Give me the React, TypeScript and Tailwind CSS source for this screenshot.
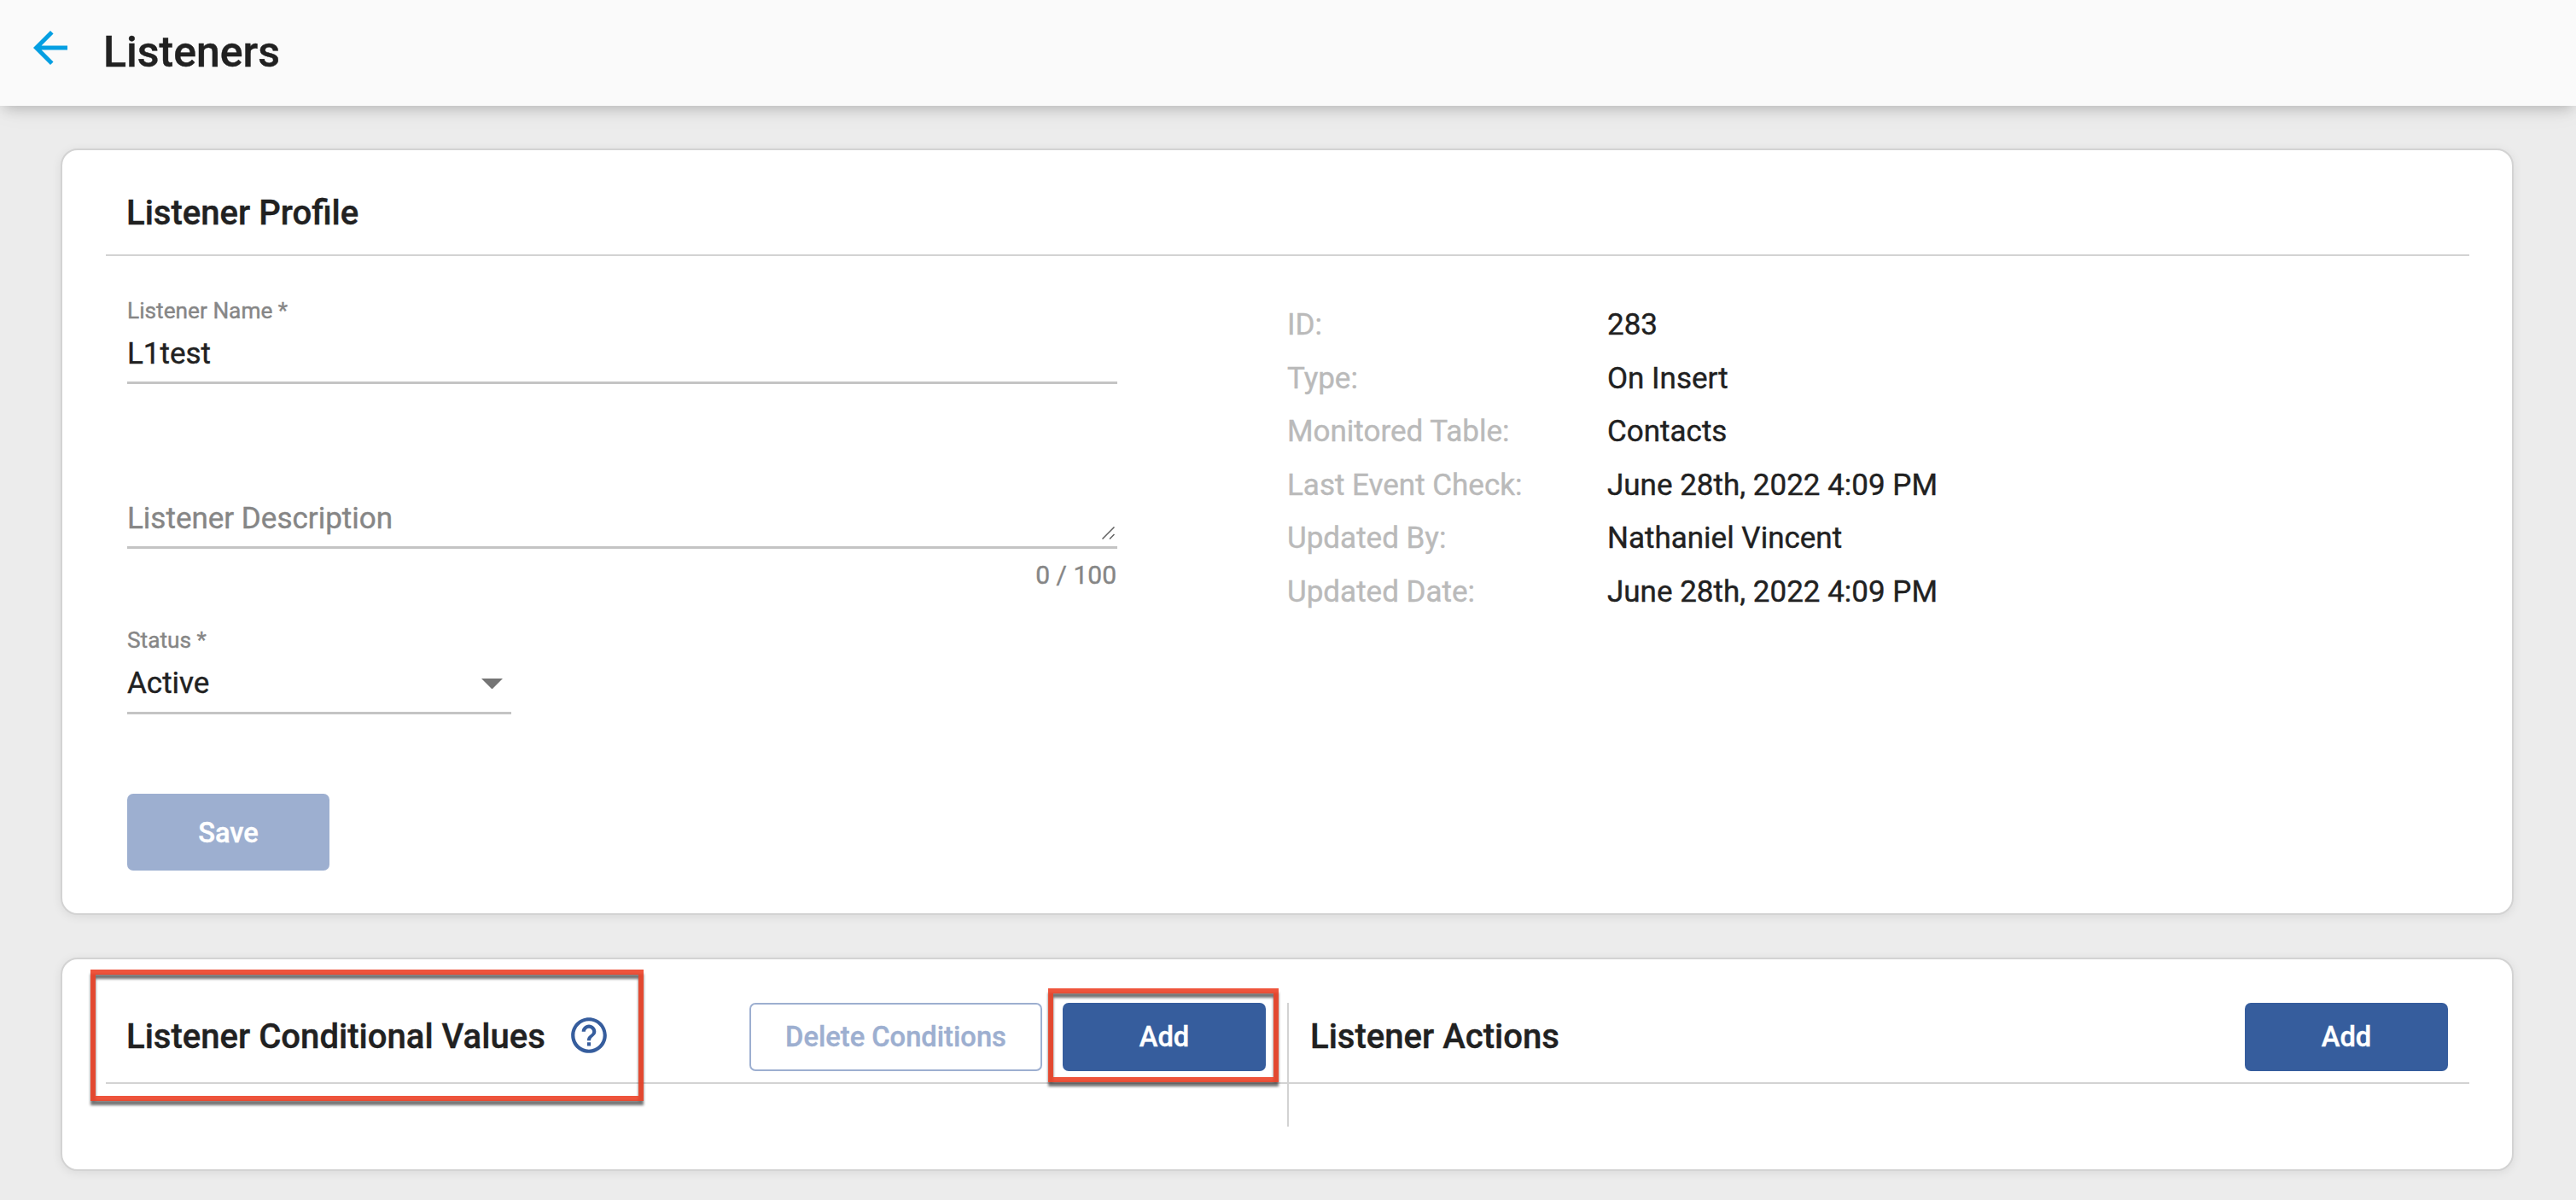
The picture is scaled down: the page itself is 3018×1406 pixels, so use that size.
import type { ReactNode } from "react";

const details: [string, string][] = [
  ["ID:", "283"],
  ["Type:", "On Insert"],
  ["Monitored Table:", "Contacts"],
  ["Last Event Check:", "June 28th, 2022 4:09 PM"],
  ["Updated By:", "Nathaniel Vincent"],
  ["Updated Date:", "June 28th, 2022 4:09 PM"],
];

function Card({ className, children }: { className: string; children: ReactNode }) {
  return (
    <section
      className={`rounded-[20px] border-2 border-[#d3d3d3] bg-white pr-[50px] pl-[51px] shadow-[0_2px_12px_rgba(0,0,0,0.08)] ${className}`}
    >
      {children}
    </section>
  );
}

function Heading({ children }: { children: ReactNode }) {
  return <h2 className="text-[40.1px] leading-[47px] font-medium whitespace-nowrap">{children}</h2>;
}

function AddButton() {
  return (
    <button className="h-20 w-[238px] rounded-[7px] bg-[#365d9d] text-[32.7px] leading-[38px] font-medium text-white">
      Add
    </button>
  );
}

/* Red callout frame drawn over the page */
function Highlight({ className }: { className: string }) {
  return (
    <div
      className={`pointer-events-none absolute border-6 border-[rgba(236,67,41,0.91)] drop-shadow-[0_5px_1.5px_rgba(0,0,0,0.6)] ${className}`}
    />
  );
}

export default function App() {
  return (
    <div className="relative h-[1406px] w-[3018px] overflow-hidden bg-[#ececec] font-[Roboto,sans-serif] text-[#212121] [-webkit-text-stroke:0.4px]">
      <header className="flex h-[124px] items-start gap-8 bg-[#fafafa] pl-[29px] shadow-[0_8px_15px_-5px_rgba(0,0,0,0.2),0_4px_30px_rgba(0,0,0,0.06)]">
        <svg className="mt-[25.5px] size-[60px] shrink-0 fill-[#049fe2]" viewBox="0 0 24 24">
          <path d="M20 11H7.83l5.59-5.59L12 4l-8 8 8 8 1.41-1.41L7.83 13H20v-2z" />
        </svg>
        <h1 className="mt-8 text-[50px] leading-[58px] font-medium">Listeners</h1>
      </header>

      <main className="flex flex-col gap-[50px] pt-[50px] pr-[73px] pl-[71px]">
        <Card className="h-[898px]">
          <div className="border-b-2 border-[#d3d3d3] pt-[50px] pb-[25px] pl-6">
            <Heading>Listener Profile</Heading>
          </div>
          <div className="flex">
            <form className="mr-[199px] ml-[25px] w-[1160px] pt-[49px]">
              <div className="border-b-3 border-[#c4c4c4] pb-[11px]">
                <label className="block text-[26.25px] leading-[30px] text-[#868686]">Listener Name *</label>
                <div className="mt-[15px] text-[35px] leading-[42px]">L1test</div>
              </div>
              <div className="relative mt-[137px] border-b-3 border-[#c4c4c4] pb-[11px] text-[35px] leading-[42px] text-[#868686]">
                Listener Description
                <svg
                  className="absolute right-[3px] bottom-2 size-[15px] fill-none stroke-[#606060]"
                  viewBox="0 0 15 15"
                  strokeWidth="1.5"
                >
                  <path d="M.5 14.5l14-14M9 14.5l5.5-5.5" />
                </svg>
              </div>
              <div className="mt-[13px] pr-px text-right text-[30px] leading-[35px] text-[#868686]">0 / 100</div>
              <div className="mt-11 w-[450px] border-b-3 border-[#c4c4c4] pb-3">
                <label className="block text-[26.25px] leading-[30px] text-[#868686]">Status *</label>
                <div className="mt-[15px] flex items-center justify-between pr-2.5 text-[35px] leading-[42px]">
                  Active
                  <svg className="h-[12.5px] w-[25px] fill-[#757575]" viewBox="0 0 10 5">
                    <path d="M0 0l5 5 5-5z" />
                  </svg>
                </div>
              </div>
              <button className="mt-[93px] block h-[90px] w-[237px] rounded-[7px] bg-[#9dafd0] pt-0.5 text-[32.7px] leading-[38px] font-medium text-white">
                Save
              </button>
            </form>
            <dl className="grid grid-cols-[375px_auto] content-start pt-[50px] text-[35px] leading-[62.6px]">
              {details.map(([label, value]) => (
                <div key={label} className="col-span-2 grid grid-cols-subgrid">
                  <dt className="text-[#bababa]">{label}</dt>
                  <dd>{value}</dd>
                </div>
              ))}
            </dl>
          </div>
        </Card>

        <Card className="flex h-[250px] pt-[51px]">
          <div className="h-[145px] w-[1386px] border-r-2 border-[#d3d3d3]">
            <div className="flex items-center border-b-2 border-[#d3d3d3] pr-[25px] pb-[13px] pl-6">
              <div className="pb-px">
                <Heading>Listener Conditional Values</Heading>
              </div>
              <svg className="mb-1 ml-[26px] size-[50px] shrink-0 fill-[#365d9d]" viewBox="0 0 24 24">
                <path d="M11 18h2v-2h-2v2zm1-16C6.48 2 2 6.48 2 12s4.480 10 10 10 10-4.480 10-10S17.520 2 12 2zm0 18c-4.410 0-8-3.590-8-8s3.590-8 8-8 8 3.590 8 8-3.590 8-8 8zm0-14c-2.210 0-4 1.790-4 4h2c0-1.100.900-2 2-2s2 .900 2 2c0 2-3 1.750-3 5h2c0-2.250 3-2.500 3-5 0-2.210-1.790-4-4-4z" />
              </svg>
              <button className="ml-auto h-20 w-[343px] rounded-[7px] border-2 border-[#9dafd0] text-[32.7px] leading-[38px] font-medium text-[#9dafd0]">
                Delete Conditions
              </button>
              <div className="ml-6 flex">
                <AddButton />
              </div>
            </div>
          </div>
          <div className="flex-1">
            <div className="flex items-center justify-between border-b-2 border-[#d3d3d3] pr-[25px] pb-[13px] pl-[25px]">
              <div className="pb-px">
                <Heading>Listener Actions</Heading>
              </div>
              <AddButton />
            </div>
          </div>
        </Card>
      </main>

      <Highlight className="top-[1136px] left-[106px] h-[154px] w-[648px]" />
      <Highlight className="top-[1158px] left-[1228px] h-[110px] w-[270px]" />
    </div>
  );
}
